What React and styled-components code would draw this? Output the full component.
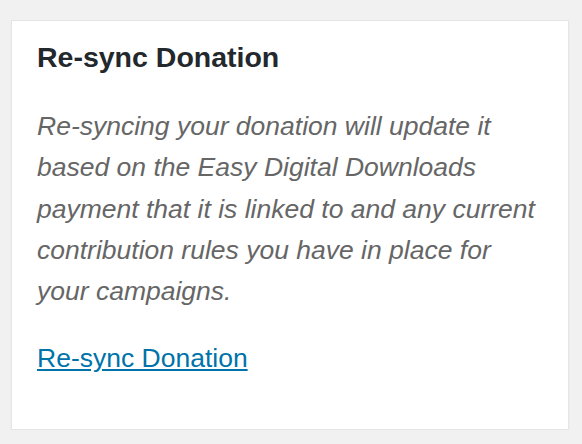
import React from 'react';
import styled, { createGlobalStyle } from 'styled-components';

const GlobalStyle = createGlobalStyle`
  html, body {
    margin: 0;
    padding: 0;
    background: #f1f1f1;
  }
  body {
    padding: 20px 13px 0 11px;
    font-family: "Liberation Sans", Arial, sans-serif;
  }
`;

const Box = styled.div`
  width: 558px;
  box-sizing: border-box;
  background: #fff;
  border: 1px solid #e5e5e5;
  box-shadow: 0 2px 2px rgba(0, 0, 0, 0.04);
`;

const Title = styled.h2`
  margin: 0;
  padding: 17px 25px 0;
  font-size: 28.5px;
  line-height: 39px;
  font-weight: 700;
  color: #23282d;
`;

const Inside = styled.div`
  padding: 29px 28px 49px 25px;
`;

const Text = styled.p`
  margin: 0 0 ${(p) => p.gap || 0}px;
  font-size: 26.5px;
  line-height: 41.3px;
  color: #666;
  font-style: ${(p) => (p.italic ? 'italic' : 'normal')};
`;

const Link = styled.a`
  color: #0073aa;
  text-decoration: underline;
  text-underline-offset: 2px;
`;

const App = () => (
  <>
    <GlobalStyle />
    <Box>
      <Title>Re-sync Donation</Title>
      <Inside>
        <Text italic gap={26}>
          Re-syncing your donation will update it based on the Easy Digital
          Downloads payment that it is linked to and any current contribution
          rules you have in place for your campaigns.
        </Text>
        <Text>
          <Link href="#">Re-sync Donation</Link>
        </Text>
      </Inside>
    </Box>
  </>
);

export default App;
